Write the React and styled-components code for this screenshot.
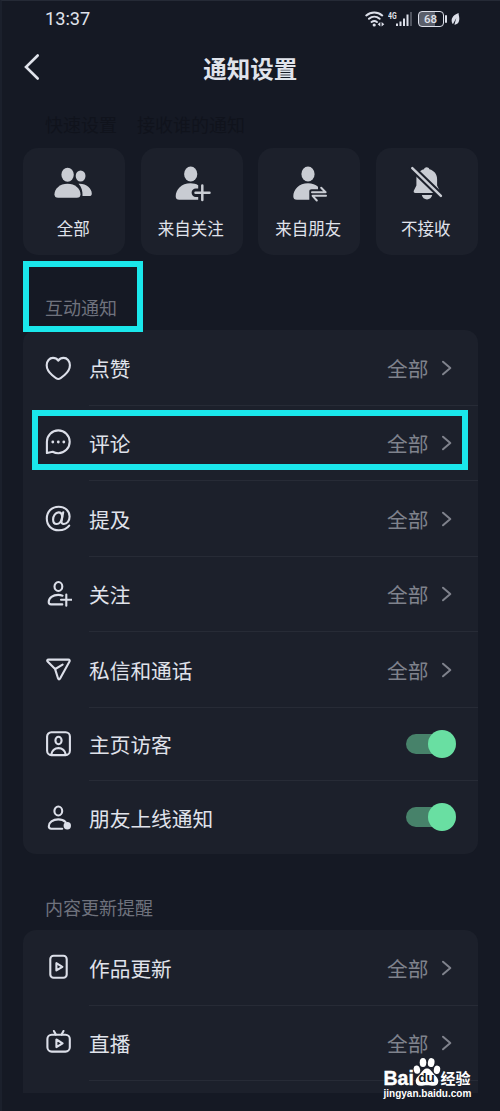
import React from "react";
import styled, { createGlobalStyle, css } from "styled-components";

const colors = {
  page: "#151924",
  card: "#1c202b",
  divider: "#272b36",
  text: "#e0e3eb",
  muted: "#7f828c",
  section: "#6f727d",
  faded: "#10131c",
  icon: "#dcdfe9",
  solidIcon: "#c9ccd3",
  mark: "#1ae7eb",
  knob: "#69dfa2",
  track: "#47826a"
};

const quickOptions = [
  { id: "all", label: "全部" },
  { id: "following", label: "来自关注" },
  { id: "friends", label: "来自朋友" },
  { id: "none", label: "不接收" }
];

const interactionRows = [
  { id: "like", label: "点赞", value: "全部" },
  { id: "comment", label: "评论", value: "全部", marked: true },
  { id: "mention", label: "提及", value: "全部" },
  { id: "follow", label: "关注", value: "全部" },
  { id: "message", label: "私信和通话", value: "全部" },
  { id: "visitor", label: "主页访客", toggle: true },
  { id: "online", label: "朋友上线通知", toggle: true }
];

const updateRows = [
  { id: "works", label: "作品更新", value: "全部" },
  { id: "live", label: "直播", value: "全部" }
];

const quickIcons = {
  all: (
    <>
      <ellipse cx="31.6" cy="13" rx="4.9" ry="5.5" />
      <path d="M29.5 20.8c7.4-.6 13.3 4.6 13.3 9.6 0 1.900-.9 2.700-2.700 2.700H33.500c.3-5-1-9-4-12.300z" />
      <ellipse cx="18.6" cy="11.8" rx="6.2" ry="7" />
      <path
        className="outlined"
        d="M18.500 20.700c7.600 0 13 5 13 10.500 0 2.500-1.200 3.500-3.600 3.500H9.100c-2.400 0-3.600-1-3.600-3.500 0-5.500 5.400-10.500 13-10.500z"
      />
    </>
  ),
  following: (
    <>
      <ellipse cx="23.7" cy="11" rx="6.6" ry="7.6" />
      <path d="M23.500 20.300c3 0 5.600.7 7.700 1.900v3.300h-2.400a4.200 4.200 0 0 0 0 8.400h2.400v2.800H12.300c-2.400 0-3.600-1-3.600-3.500 0-6.500 5.800-12.900 14.800-12.900z" />
      <path d="M35.300 22.500v14.600M28.500 29.700h14" className="line" />
    </>
  ),
  friends: (
    <>
      <ellipse cx="24" cy="11" rx="6.6" ry="7.6" />
      <path d="M24 20.300c4.200 0 7.600 1.400 10 3.400v2.600h-6.500c-1.400 0-2.200.9-2.200 2.200v8.200H12.900c-2.400 0-3.600-1-3.600-3.500 0-6.500 5.700-12.900 14.700-12.900z" />
      <path d="M28 29.200h13.600l-4.400-4.400M42 32.800H28.600l4.200 4.700" className="line thin" />
    </>
  ),
  none: (
    <>
      <path d="M24.700 4.300c1.300 0 2.200.7 2.700 1.900 4.800 1.300 7.700 5 7.700 9.700v6.500l2.400 5c.7 1.500.1 2.500-1.500 2.500H13.400c-1.600 0-2.100-1-1.500-2.500l2.500-5v-6.500c0-4.700 2.800-8.400 7.600-9.700.5-1.200 1.400-1.900 2.700-1.900z" />
      <path d="M19.800 32h10.400c-.6 2.800-2.600 4.400-5.200 4.400s-4.600-1.600-5.200-4.400z" />
      <path d="M10.300 5.200l28.600 27.700" className="gap" />
      <path d="M10.300 5.200l28.600 27.700" className="line" />
    </>
  )
};

const rowIcons = {
  like: (
    <path d="M14.300 25c-1.300 0-11.600-5.900-11.600-13.700 0-4.300 2.800-7.400 6.300-7.400 2.100 0 4.100 1 5.300 2.700 1.200-1.700 3.200-2.700 5.300-2.700 3.500 0 6.300 3.100 6.300 7.400 0 7.800-10.300 13.700-11.600 13.700z" />
  ),
  comment: (
    <>
      <path d="M2.900 24V12.800a11.400 11.400 0 1 1 11.400 11.400c-2 0-3.900-.5-5.600-1.400z" />
      <circle cx="8.8" cy="13" r="1.400" className="fill" />
      <circle cx="14.3" cy="13" r="1.400" className="fill" />
      <circle cx="19.8" cy="13" r="1.400" className="fill" />
    </>
  ),
  mention: (
    <>
      <path d="M25.200 20.700c-2.300 3.100-6 4.600-10.500 4.600C7.500 25.300 2.800 20.400 2.800 13.600 2.800 6.700 7.700 1.700 14.700 1.700c6.300 0 10.900 4.100 10.900 9.900 0 4.300-2.600 7.400-5.700 7.400-2 0-2.700-1.200-2.300-3.200l1.600-8.600" />
      <path d="M18.200 11.800c-.2-2.700-1.500-4.400-3.600-4.400-3.100 0-5.500 3.400-5.500 7.100 0 2.800 1.400 4.500 3.500 4.500 2.700 0 4.900-3 5.600-7.200z" />
    </>
  ),
  follow: (
    <>
      <ellipse cx="14.4" cy="6.5" rx="3.9" ry="4.500" />
      <path d="M18.500 15.700c-1.300-.5-2.700-.8-4.200-.8-5.500 0-9.600 3-9.600 7.100 0 1.600.8 2.400 2.400 2.400h11.200M22.300 14.500v11.300M17 19.800h10.600" />
    </>
  ),
  message: (
    <path d="M4.600 3.600h19.800c1.200 0 1.700.9 1.100 2L16.100 22.500c-.7 1.200-1.700 1.100-2.100-.2l-2.900-9.200L3.600 5.500c-.9-1-.4-1.900 1-1.900zM11.300 13l7.300-4.400" />
  ),
  visitor: (
    <>
      <rect x="3.1" y="2.3" width="22.8" height="22.8" rx="4.300" />
      <ellipse cx="14.5" cy="10.5" rx="3.1" ry="3.700" />
      <path d="M7.300 24.500c.6-3.800 3.500-6.400 7.200-6.400s6.600 2.600 7.200 6.400" />
    </>
  ),
  online: (
    <>
      <ellipse cx="14.3" cy="7" rx="3.9" ry="4.500" />
      <path d="M21.500 18c-1.700-1.600-4.300-2.600-7.200-2.600-5.500 0-9.500 3-9.500 6.900 0 1.600.8 2.400 2.400 2.400h11" />
      <circle cx="23.3" cy="21.8" r="3.700" className="fill" />
    </>
  ),
  works: (
    <>
      <rect x="6.3" y="1.8" width="16.4" height="22" rx="3.300" />
      <path d="M12.400 9.200v7.200l6-3.600z" />
    </>
  ),
  live: (
    <>
      <rect x="3.4" y="5.8" width="22.4" height="16.8" rx="4.300" />
      <path d="M12.400 10.500v7.600l6.200-3.800zM9.900 2l1.900 3.600M19.500 2l-1.900 3.600" />
    </>
  )
};

const StatusBar = () => (
  <StatusBarStyled>
    <Clock>13:37</Clock>
    <StatusIcons>
      <svg width="20" height="18" viewBox="0 0 20 18">
        <g fill="none" stroke={colors.icon} strokeWidth="2" strokeLinecap="round">
          <path d="M1.300 5.400c4.600-4 11.300-4 15.900 0M4 8.800c3.100-2.700 7.500-2.700 10.600 0M6.600 12c1.700-1.300 3.700-1.300 5.300 0" />
        </g>
        <circle cx="9.2" cy="15" r="1.600" fill={colors.icon} />
        <path d="M15.300 11.900v4.600L12.700 14.200zM16.600 11.900v4.600L19.300 14.200z" fill={colors.icon} />
      </svg>
      <Network>4G</Network>
      <svg width="17" height="15" viewBox="0 0 17 15" fill={colors.icon}>
        <rect x="0" y="11.5" width="2" height="2.500" />
        <rect x="3.5" y="9.5" width="2" height="4.500" />
        <rect x="7" y="6.5" width="2" height="7.500" />
        <rect x="10.5" y="2.5" width="2" height="11.500" />
        <rect x="14" y="0" width="2" height="14" opacity="0.3" />
      </svg>
      <Battery>68</Battery>
      <BatteryTip />
      <svg width="9" height="14" viewBox="0 0 9 14">
        <path
          d="M7.600 1C3 2.700.4 5.500.7 9.200c.1 1.400.7 2.400 1.300 2.900L5.300 6 3.400 12.800C7 12.400 8.500 9.500 8.300 6.200 8.200 4.200 7.500 2.800 7.600 1z"
          fill={colors.icon}
        />
      </svg>
    </StatusIcons>
  </StatusBarStyled>
);

const Row = ({ id, label, value, toggle, marked }) => (
  <RowStyled $toggle={toggle}>
    <RowIcon viewBox="0 0 28 28">{rowIcons[id]}</RowIcon>
    <RowBody>
      <RowLabel>{label}</RowLabel>
      {toggle ? (
        <Toggle>
          <Knob />
        </Toggle>
      ) : (
        <RowValue>
          {value}
          <svg width="12" height="18" viewBox="0 0 12 18">
            <path d="M2 2.700L9.300 9 2 15.300" />
          </svg>
        </RowValue>
      )}
    </RowBody>
    {marked && <RowMark />}
  </RowStyled>
);

const Watermark = () => (
  <WatermarkStyled>
    <Brand>
      <BrandLatin>Bai</BrandLatin>
      <Paw>
        <svg width="28" height="30" viewBox="0 0 28 30" fill="#fff">
          <ellipse cx="3.9" cy="12.6" rx="3.2" ry="4.2" transform="rotate(-12 3.9 12.6)" />
          <ellipse cx="10" cy="5.4" rx="3.3" ry="4.500" />
          <ellipse cx="18.2" cy="5.6" rx="3.3" ry="4.5" transform="rotate(10 18.2 5.6)" />
          <ellipse cx="24" cy="12.8" rx="3.2" ry="4.2" transform="rotate(10 24 12.8)" />
          <path d="M14 11.400c3.200 0 4.400 2.700 6.300 5 2 2.300 5 4.200 5 7.800 0 3-2 4.600-4.800 4.600-2.200 0-4-.5-6.500-.5s-4.300.5-6.500.5c-2.800 0-4.800-1.700-4.800-4.600 0-3.600 3-5.500 5-7.800 1.900-2.300 3.100-5 6.300-5z" />
        </svg>
        <PawText>du</PawText>
      </Paw>
      <BrandHan>经验</BrandHan>
    </Brand>
    <Site>jingyan.baidu.com</Site>
  </WatermarkStyled>
);

const App = () => (
  <>
    <GlobalStyle />
    <Screen>
      <StatusBar />
      <Header>
        <BackIcon viewBox="0 0 18 28">
          <path d="M14.700 2.500L3 14l11.700 11.500" />
        </BackIcon>
        <Title>通知设置</Title>
      </Header>
      <FadedHeading>
        <span>快速设置</span>
        <span>接收谁的通知</span>
      </FadedHeading>
      <QuickGrid>
        {quickOptions.map(({ id, label }) => (
          <QuickCard key={id}>
            <QuickIcon viewBox="0 0 48 40">{quickIcons[id]}</QuickIcon>
            {label}
          </QuickCard>
        ))}
      </QuickGrid>
      <SectionTitle $height={75}>
        互动通知
        <TitleMark />
      </SectionTitle>
      <Card>
        {interactionRows.map(row => (
          <Row key={row.id} {...row} />
        ))}
      </Card>
      <SectionTitle $height={76}>内容更新提醒</SectionTitle>
      <Card $cut>
        {updateRows.map(row => (
          <Row key={row.id} {...row} />
        ))}
        <NextRow />
      </Card>
      <Watermark />
    </Screen>
  </>
);

export default App;

// Styles
const GlobalStyle = createGlobalStyle`
  * {
    box-sizing: border-box;
  }

  body {
    margin: 0;
    background: ${colors.page};
    font-family: "Noto Sans CJK SC", sans-serif;
  }

  svg {
    display: block;
    flex-shrink: 0;
  }
`;

const Screen = styled.div`
  position: relative;
  display: flex;
  flex-direction: column;
  width: 500px;
  height: 1111px;
  padding: 0 22.5px 0 21px;
  overflow: hidden;
  color: ${colors.text};
  background: ${colors.page};
  border-top: 1px solid #252a36;
  border-left: 2px solid #1b202c;
`;

const StatusBarStyled = styled.div`
  display: flex;
  align-items: center;
  justify-content: space-between;
  height: 36px;
  padding: 0 18px 0 22px;
`;

const Clock = styled.span`
  font-family: Roboto, sans-serif;
  font-size: 18.2px;
  line-height: 36px;
`;

const StatusIcons = styled.div`
  display: flex;
  align-items: center;
`;

const Network = styled.span`
  align-self: flex-start;
  width: 8px;
  margin-top: 1px;
  margin-left: 3px;
  font-family: Roboto, sans-serif;
  font-size: 9.5px;
  font-weight: 700;
  line-height: 9px;
  transform: scaleX(0.72);
  transform-origin: left;
`;

const Battery = styled.span`
  width: 26px;
  height: 16px;
  margin-left: 5px;
  border: 1.5px solid ${colors.icon};
  border-radius: 4px;
  background: linear-gradient(90deg, #5b5f6b 65%, transparent 65%);
  font-family: Roboto, sans-serif;
  font-size: 11.5px;
  font-weight: 500;
  line-height: 14px;
  text-align: center;
`;

const BatteryTip = styled.span`
  width: 2px;
  height: 8px;
  margin: 0 4px 0 1px;
  border-radius: 1px;
  background: ${colors.icon};
`;

const Header = styled.header`
  display: flex;
  align-items: center;
  height: 60px;
`;

const BackIcon = styled.svg`
  width: 18px;
  height: 28px;
  fill: none;
  stroke: ${colors.text};
  stroke-width: 2.6;
  stroke-linecap: round;
`;

const Title = styled.h1`
  flex: 1;
  margin: 1px 18px 0 0;
  font-size: 23.5px;
  font-weight: 700;
  line-height: 34px;
  text-align: center;
`;

const FadedHeading = styled.div`
  display: flex;
  gap: 20px;
  height: 51px;
  padding: 14px 22px 0;
  color: ${colors.faded};
  font-size: 18px;
  line-height: 26px;
`;

const QuickGrid = styled.div`
  display: grid;
  grid-template-columns: repeat(4, 1fr);
  gap: 15.5px;
`;

const QuickCard = styled.div`
  display: flex;
  flex-direction: column;
  align-items: center;
  height: 107px;
  padding: 15px 1.5px 0 0;
  border-radius: 15px;
  background: ${colors.card};
  font-size: 16.5px;
  line-height: 24px;
`;

const QuickIcon = styled.svg`
  width: 48px;
  height: 40px;
  margin-bottom: 13px;
  fill: ${colors.solidIcon};

  & .line,
  & .gap {
    fill: none;
    stroke: ${colors.solidIcon};
    stroke-width: 2.5;
    stroke-linecap: round;
    stroke-linejoin: round;
  }

  & .thin {
    stroke-width: 2;
  }

  & .gap {
    stroke: ${colors.card};
    stroke-width: 6.5;
  }

  & .outlined {
    stroke: ${colors.card};
    stroke-width: 2.6;
    paint-order: stroke;
  }
`;

const SectionTitle = styled.h2`
  position: relative;
  height: ${({ $height }) => $height}px;
  margin: 0;
  padding: 0 22px 10px;
  display: flex;
  align-items: flex-end;
  color: ${colors.section};
  font-size: 18px;
  font-weight: 400;
  line-height: 26px;
`;

const Card = styled.section`
  border-radius: ${({ $cut }) => ($cut ? "13px 13px 0 0" : "13px")};
  background: ${colors.card};
`;

const RowBody = styled.div`
  display: flex;
  flex: 1;
  align-items: center;
  justify-content: space-between;
  padding-right: 21.5px;
  border-bottom: 1px solid ${colors.divider};
`;

const RowStyled = styled.div`
  position: relative;
  display: flex;
  height: 75.5px;
  padding-left: 21px;

  ${({ $toggle }) =>
    $toggle &&
    css`
      height: 73.5px;
    `}

  &:last-child {
    height: 73px;
  }

  &:last-child ${RowBody} {
    border-bottom-color: transparent;
  }
`;

const RowIcon = styled.svg`
  align-self: center;
  width: 28px;
  height: 28px;
  margin-right: 17px;
  fill: none;
  stroke: ${colors.icon};
  stroke-width: 2.1;
  stroke-linecap: round;
  stroke-linejoin: round;

  & .fill {
    fill: ${colors.icon};
    stroke: none;
  }
`;

const RowLabel = styled.span`
  padding-top: 1px;
  font-size: 20.7px;
  line-height: 30px;
`;

const RowValue = styled.span`
  display: flex;
  align-items: center;
  gap: 12px;
  padding: 1px 3.5px 0 0;
  color: ${colors.muted};
  font-size: 20.7px;
  line-height: 30px;

  & path {
    fill: none;
    stroke: ${colors.muted};
    stroke-width: 2;
    stroke-linecap: round;
    stroke-linejoin: round;
  }
`;

const Toggle = styled.span`
  display: flex;
  align-items: center;
  justify-content: flex-end;
  width: 50.5px;
  height: 20px;
  border-radius: 10px;
  background: linear-gradient(90deg, ${colors.track} 40px, transparent 40px);
`;

const Knob = styled.span`
  flex-shrink: 0;
  width: 28px;
  height: 28px;
  border-radius: 50%;
  background: ${colors.knob};
`;

const NextRow = styled.div`
  height: 12px;
`;

const TitleMark = styled.span`
  position: absolute;
  top: 6px;
  left: 0;
  z-index: 1;
  width: 119.5px;
  height: 71px;
  border: 6.5px solid ${colors.mark};
`;

const RowMark = styled.span`
  position: absolute;
  top: 4px;
  right: 9.5px;
  left: 9px;
  height: 60.5px;
  border: 6.5px solid ${colors.mark};
`;

const WatermarkStyled = styled.div`
  position: absolute;
  top: 1055px;
  left: 381.5px;
  width: 92px;
  color: #fff;
`;

const Brand = styled.div`
  display: flex;
  height: 32px;
`;

const BrandLatin = styled.span`
  width: 29px;
  padding-top: 12px;
  font-family: "Liberation Sans", sans-serif;
  font-size: 19.5px;
  font-weight: 700;
  line-height: 20px;
  -webkit-text-stroke: 0.4px #fff;
`;

const Paw = styled.span`
  position: relative;
  width: 28px;
  padding-top: 1px;
`;

const PawText = styled.span`
  position: absolute;
  top: 14px;
  left: 0;
  width: 28px;
  color: ${colors.page};
  font-family: "Liberation Sans", sans-serif;
  font-size: 13.5px;
  font-weight: 700;
  line-height: 15px;
  text-align: center;
`;

const BrandHan = styled.span`
  padding-top: 11px;
  font-size: 15px;
  font-weight: 700;
  line-height: 21px;
`;

const Site = styled.div`
  font-family: "Liberation Sans", sans-serif;
  font-size: 10px;
  font-weight: 700;
  line-height: 12px;
`;
